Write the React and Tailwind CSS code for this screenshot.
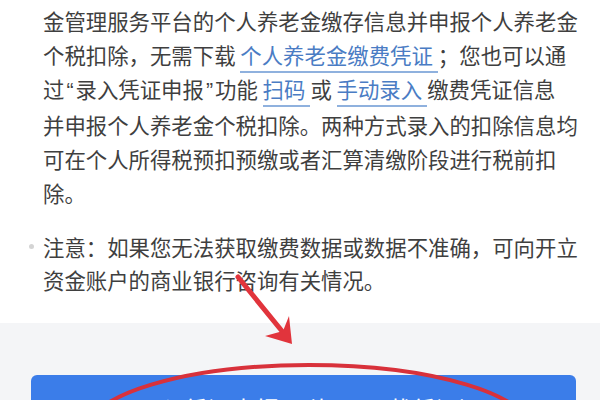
import React from 'react';

function Link({ children }) {
  return (
    <span className="text-[#4a7cc4] border-b-[2px] border-[#8fb1de] pr-[5px] pb-[1px]">
      {children}
    </span>
  );
}

// 引号用窄的西文字形
function Q({ children }) {
  return <span className="font-['Liberation_Sans',sans-serif] px-[2px]">{children}</span>;
}

export default function App() {
  return (
    <div className="relative w-[600px] h-[400px] overflow-hidden bg-white font-['Noto_Sans_CJK_SC','Noto_Sans',sans-serif] text-[#3f3f3f]">
      {/* 正文 */}
      <div className="pl-[43px] pt-[4px] text-[21.4px] leading-[34px] whitespace-nowrap">
        <div>金管理服务平台的个人养老金缴存信息并申报个人养老金</div>
        <div>
          个税扣除，无需下载 <Link>个人养老金缴费凭证</Link>；您也可以通
        </div>
        <div>
          过<Q>“</Q>录入凭证申报<Q>”</Q>功能 <Link>扫码</Link>或 <Link>手动录入</Link>缴费凭证信息
        </div>
        <div>并申报个人养老金个税扣除。两种方式录入的扣除信息均</div>
        <div>可在个人所得税预扣预缴或者汇算清缴阶段进行税前扣</div>
        <div>除。</div>
      </div>

      {/* 注意 */}
      <div className="relative mt-[20px] pl-[43px] text-[21.4px] leading-[33px] whitespace-nowrap">
        <span className="absolute left-[29px] top-[14px] w-[5px] h-[5px] rounded-full bg-[#d4d4d4]" />
        <div>注意：如果您无法获取缴费数据或数据不准确，可向开立</div>
        <div>资金账户的商业银行咨询有关情况。</div>
      </div>

      {/* 底部按钮 */}
      <div className="mt-[27px] h-[100px] bg-[#f4f5f7] pt-[52px] pl-[31px] pr-[24px]">
        <div className="h-[60px] rounded-[6px] bg-[#3b7de9] flex justify-center pt-[19px] text-white text-[24px] leading-[30px]">
          <Q>“</Q>录入凭证申报<Q>”</Q>（如已下载凭证）
        </div>
      </div>

      {/* 标注：红色箭头和圈 */}
      <svg className="absolute inset-0 pointer-events-none" width="600" height="400" viewBox="0 0 600 400">
        <line x1="238" y1="277" x2="286" y2="336" stroke="#e1343c" strokeWidth="5" strokeLinecap="round" />
        <polygon points="265,336 292,344 289,316 283,331" fill="#e1343c" />
        <ellipse cx="309" cy="432" rx="223" ry="67" fill="none" stroke="#d8313b" strokeWidth="4" />
      </svg>
    </div>
  );
}
